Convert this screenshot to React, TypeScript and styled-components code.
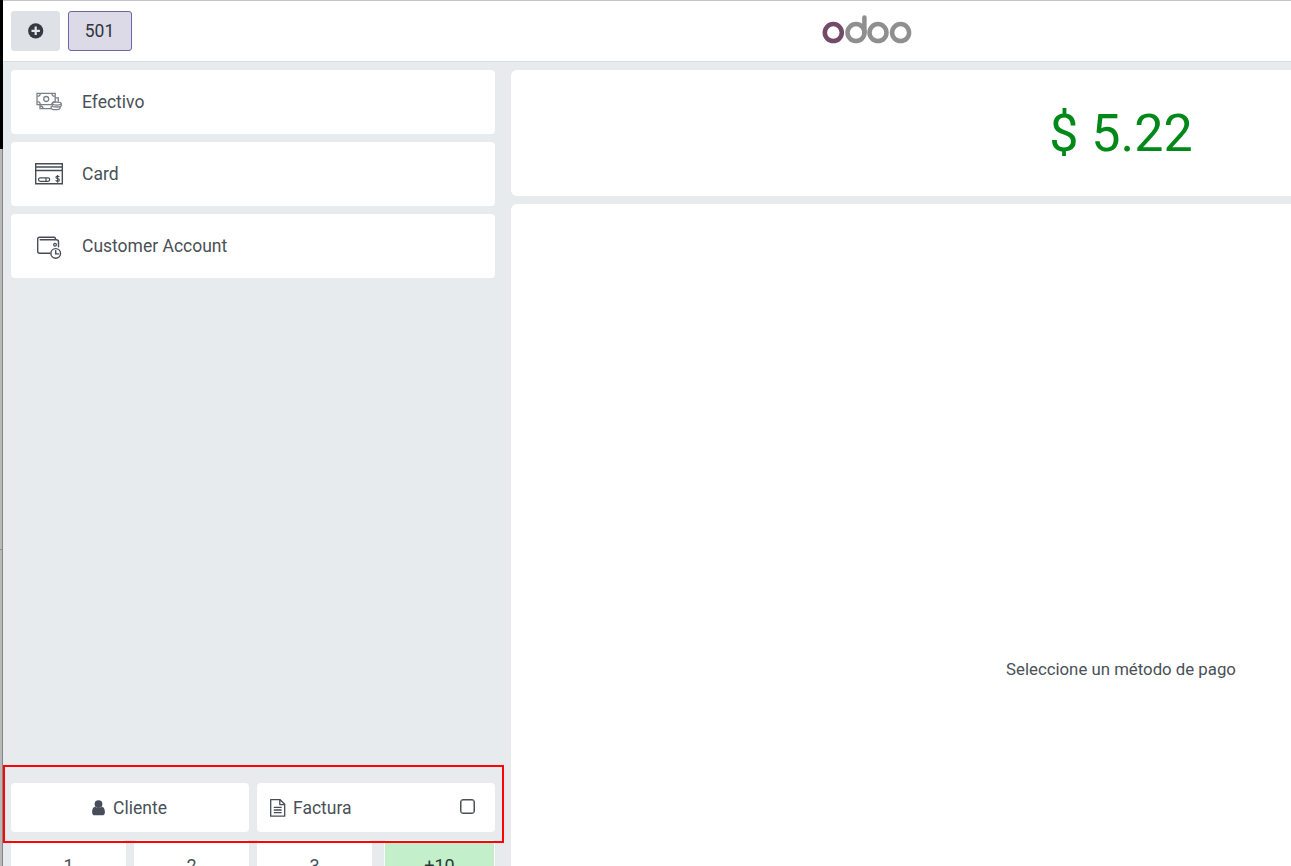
import React from "react";
import styled, { createGlobalStyle } from "styled-components";

const GlobalStyle = createGlobalStyle`
  * { box-sizing: border-box; }
  body { margin: 0; overflow: hidden; }
  button { font: inherit; color: inherit; }
`;

const Viewport = styled.div`
  position: relative;
  display: flex;
  width: 100vw;
  height: 100vh;
  overflow: hidden;
  background: #e7ebee;
  color: #495057;
  font: 400 17.5px/26px Roboto, sans-serif;
`;

const Edge = styled.div`
  flex: 0 0 3px;
  display: flex;
  flex-direction: column;
`;

const EdgePart = styled.div<{ $height?: number; $dark?: boolean }>`
  flex: ${(p) => (p.$height ? `0 0 ${p.$height}px` : "1")};
  background: ${(p) => (p.$dark ? "#000" : "#b9b9b9")};
  border-right: ${(p) => (p.$dark ? "none" : "1px solid #858585")};
  border-bottom: ${(p) => (p.$height && !p.$dark ? "1px solid #8e8e8e" : "none")};
`;

const Page = styled.div`
  flex: 0 0 1728px;
  display: flex;
  flex-direction: column;
`;

const Header = styled.header`
  flex: 0 0 62px;
  display: grid;
  grid-template-columns: 1fr auto 1fr;
  align-items: center;
  padding: 0 8px;
  background: #fff;
  border-top: 1px solid #c4c4c4;
  border-bottom: 1px solid #d9dde1;
`;

const Orders = styled.div`
  display: flex;
  gap: 8px;
`;

const OrderButton = styled.button<{ $active?: boolean }>`
  display: flex;
  align-items: center;
  justify-content: center;
  width: ${(p) => (p.$active ? 64 : 49)}px;
  height: 40px;
  padding: ${(p) => (p.$active ? "0 1px 1px 0" : "0")};
  border: 1px solid ${(p) => (p.$active ? "#71639e" : "#dee2e6")};
  border-radius: 3px;
  background: ${(p) => (p.$active ? "#dddae7" : "#dee2e6")};
  color: #2f353c;
`;

const Body = styled.main`
  flex: 1;
  min-height: 0;
  display: flex;
  gap: 16px;
  padding-left: 8px;
`;

const Side = styled.section`
  flex: 0 0 484px;
  display: flex;
  flex-direction: column;
  padding-top: 8px;
`;

const Methods = styled.div`
  flex: 0 0 713px;
  display: flex;
  flex-direction: column;
  gap: 8px;
`;

const Method = styled.button`
  display: flex;
  align-items: center;
  gap: 18px;
  height: 64px;
  padding: 0 23px;
  border: 0;
  border-radius: 4px;
  background: #fff;
`;

const MethodName = styled.span`
  padding-bottom: 1px;
`;

const Actions = styled.div`
  flex: 0 0 49px;
  display: grid;
  grid-template-columns: 1fr 1fr;
  gap: 8px;
`;

const Action = styled.button<{ $spread?: boolean }>`
  display: flex;
  align-items: center;
  justify-content: ${(p) => (p.$spread ? "space-between" : "center")};
  padding: ${(p) => (p.$spread ? "0 20px 0 13px" : "0 1px 0 0")};
  border: 0;
  border-radius: 4px;
  background: #fff;
`;

const Label = styled.span<{ $gap?: number }>`
  display: flex;
  align-items: center;
  gap: ${(p) => p.$gap ?? 8}px;
`;

const Checkbox = styled.span`
  width: 15px;
  height: 15px;
  margin-bottom: 2px;
  border: 1px solid #495057;
  border-radius: 3px;
  box-shadow: inset 0 0 0 0.5px #495057;
`;

const Keys = styled.div`
  display: grid;
  grid-template-columns: repeat(4, 115px);
  gap: 8px;
  margin-top: 8px;
`;

const Key = styled.button<{ $green?: boolean }>`
  height: 49px;
  margin-left: ${(p) => (p.$green ? 4 : 0)}px;
  padding: 2px 0 0;
  border: 0 solid #fff;
  border-width: ${(p) => (p.$green ? "2px 1px" : "0")};
  border-radius: 3px;
  background: ${(p) => (p.$green ? "#c3efca" : "#fff")};
  color: ${(p) => (p.$green ? "#2d3b35" : "#495057")};
  font-size: 18px;
  line-height: 27px;
`;

const Details = styled.section`
  flex: 1;
  display: flex;
  flex-direction: column;
  gap: 8px;
  padding-top: 8px;
`;

const Total = styled.div`
  flex: 0 0 126px;
  display: flex;
  align-items: center;
  justify-content: center;
  border-radius: 6px;
  background: #fff;
  color: #008818;
  font-size: 52px;
  line-height: 27px;
`;

const Message = styled.div`
  flex: 1;
  padding-top: 452px;
  border-radius: 6px 0 0 0;
  background: #fff;
  text-align: center;
  font-size: 16.8px;
  line-height: 27px;
`;

const Highlight = styled.div`
  position: absolute;
  left: 3px;
  top: 765px;
  width: 501px;
  height: 78px;
  border: 2px solid #fb0505;
  pointer-events: none;
`;

const Logo = () => (
  <svg width="90" height="32" viewBox="0 0 90 32" fill="none" stroke="#8f8f8f" strokeWidth="4.5">
    <circle cx="11.3" cy="17.6" r="8.5" stroke="#714b67" />
    <circle cx="34" cy="17.6" r="8.5" />
    <path d="M42.4 17.6V2.5" strokeLinecap="round" />
    <circle cx="56" cy="17.6" r="8.5" />
    <circle cx="78.6" cy="17.6" r="8.5" />
  </svg>
);

const PlusIcon = () => (
  <svg width="16" height="16" viewBox="0 0 16 16">
    <circle cx="7.7" cy="7.8" r="7.6" fill="#343a43" />
    <path d="M7.7 3.6V12M3.5 7.8h8.4" stroke="#e3e6e9" strokeWidth="2.2" />
  </svg>
);

const CashIcon = () => (
  <svg width="30" height="30" viewBox="0 0 30 30" fill="none" stroke="#7b7f87" strokeWidth="1.3">
    <path d="M3 6.3h18.2v11.4H3z" />
    <path d="M6.3 6.8Q6.1 9.2 3.5 9.4M17.9 6.8q.2 2.4 2.8 2.6M6.3 17.2q-.2-2.4-2.8-2.6M17.9 17.2q.2-2.4 2.8-2.6" />
    <circle cx="12.2" cy="12" r="2.5" />
    <path d="M21.5 10.8h2.8v4M6 18v3.6h11M6.5 19q2.2 0 2.5 2.3" />
    <g fill="#fff">
      <path d="M17.2 19v1.9c0 2.3 8.8 2.3 8.8 0V19" />
      <path d="M18.4 16.6v1.8c0 2.1 8.8 2.1 8.8 0v-1.8" />
      <ellipse cx="22.8" cy="16.6" rx="4.4" ry="1.5" />
    </g>
  </svg>
);

const CardIcon = () => (
  <svg width="30" height="30" viewBox="0 0 30 30" fill="none" stroke="#474c57" strokeWidth="1.4">
    <path d="M1.7 4.7h26.6v20H1.7zM1.7 8h26.6M1.7 11.5h26.6" />
    <rect x="4.5" y="18.9" width="11.2" height="3.4" rx="1.7" strokeWidth="1.2" />
    <path d="M12 19v3.2" strokeWidth="1.2" />
    <path d="M25.3 18.2q-.3-1.1-1.7-1.1-1.7 0-1.7 1.2 0 1 1.7 1.3 1.8.3 1.8 1.5 0 1.3-1.8 1.3-1.6 0-1.8-1.3M23.6 16v7.7" strokeWidth="1.1" />
  </svg>
);

const WalletIcon = () => (
  <svg width="30" height="30" viewBox="0 0 30 30" fill="none" stroke="#474c57" strokeWidth="1.4" strokeLinecap="round" strokeLinejoin="round">
    <path d="M16 22.3H5.7q-2 0-2-2V8q0-1.8 2-1.8h14.5q1.3 0 1.3 2.2M6.2 8.8h16q2.3 0 2.3 2v5" />
    <circle cx="21" cy="13.7" r="1.4" strokeWidth="1.2" />
    <circle cx="21.7" cy="22.4" r="4.8" fill="#fff" />
    <path d="M21.7 19.7v3.2h2.7" />
  </svg>
);

const UserIcon = () => (
  <svg width="13" height="16" viewBox="0 0 13 16" fill="#474e59">
    <circle cx="6.5" cy="4.1" r="3.9" />
    <path d="M3.2 6.7C1 7.1.1 9.3.1 12.2c0 1.9 1 3.1 2.6 3.1h7.6c1.6 0 2.6-1.2 2.6-3.1 0-2.9-.9-5.1-3.1-5.5-1.7 1.8-4.9 1.8-6.6 0z" />
  </svg>
);

const InvoiceIcon = () => (
  <svg width="16" height="18" viewBox="0 0 16 18" fill="none" stroke="#474c57" strokeWidth="1.3">
    <path d="M.7.7h9.5l4.5 4.5v12H.7zM9.8 1v4.6h4.6M3.8 8.4h7.8M3.8 11h7.8M3.8 13.6h7.8" strokeLinejoin="round" />
  </svg>
);

const methods = [
  { name: "Efectivo", Icon: CashIcon },
  { name: "Card", Icon: CardIcon },
  { name: "Customer Account", Icon: WalletIcon },
];

export default function App() {
  return (
    <Viewport>
      <GlobalStyle />
      <Edge>
        <EdgePart $height={149} $dark />
        <EdgePart $height={401} />
        <EdgePart />
      </Edge>
      <Page>
        <Header>
          <Orders>
            <OrderButton aria-label="Nuevo pedido"><PlusIcon /></OrderButton>
            <OrderButton $active>501</OrderButton>
          </Orders>
          <Logo />
        </Header>
        <Body>
          <Side>
            <Methods>
              {methods.map(({ name, Icon }) => (
                <Method key={name}><Icon /><MethodName>{name}</MethodName></Method>
              ))}
            </Methods>
            <Actions>
              <Action><Label><UserIcon />Cliente</Label></Action>
              <Action $spread>
                <Label $gap={7}><InvoiceIcon />Factura</Label>
                <Checkbox />
              </Action>
            </Actions>
            <Keys>
              {["1", "2", "3", "+10"].map((key) => (
                <Key key={key} $green={key === "+10"}>{key}</Key>
              ))}
            </Keys>
          </Side>
          <Details>
            <Total>$ 5.22</Total>
            <Message>Seleccione un método de pago</Message>
          </Details>
        </Body>
      </Page>
      <Highlight />
    </Viewport>
  );
}
